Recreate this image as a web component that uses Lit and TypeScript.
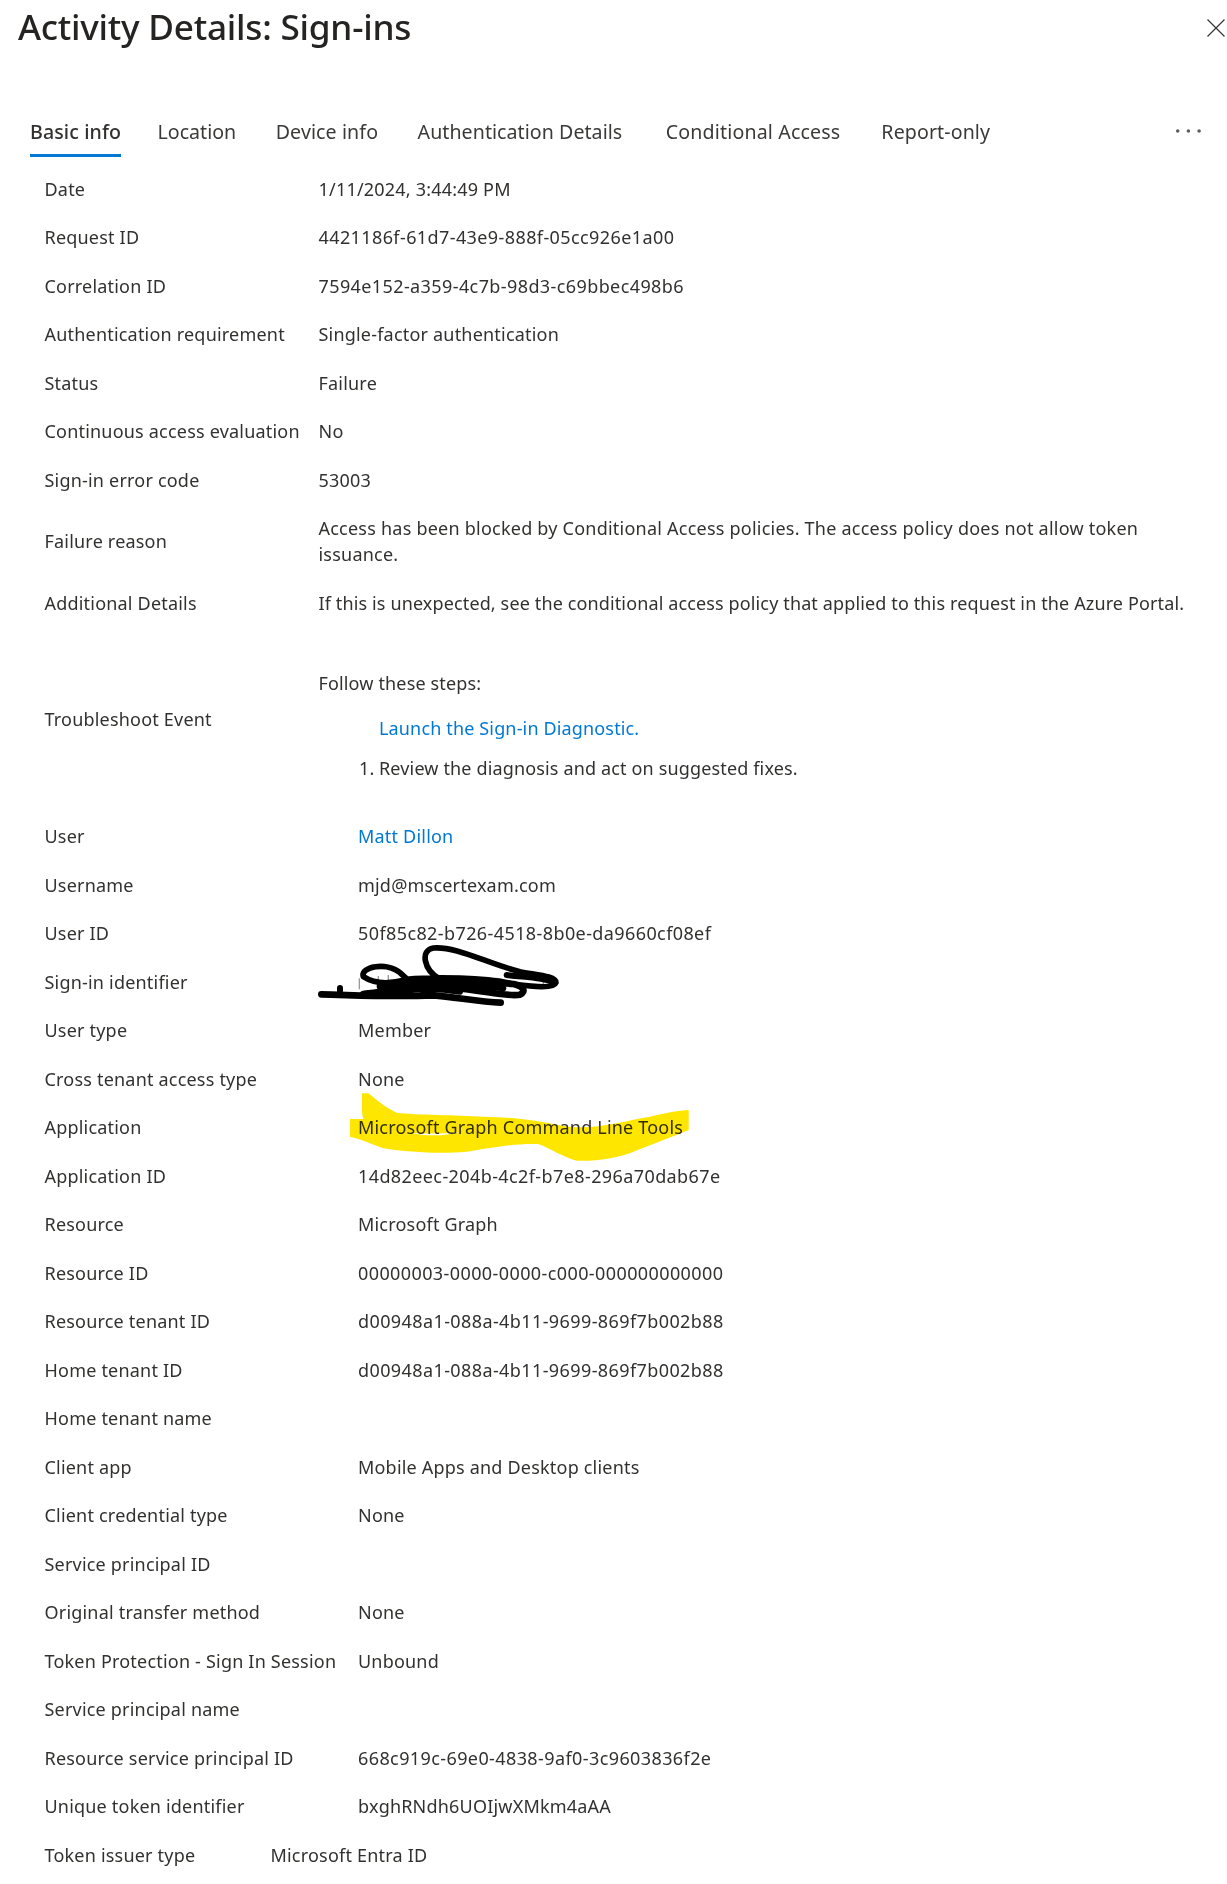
import { html, css, LitElement, svg } from 'lit';
import { customElement } from 'lit/decorators.js';

type Row = [string, string, string?];

const TABS = ['Basic info', 'Location', 'Device info', 'Authentication Details', 'Conditional Access', 'Report-only'];

const TOP_ROWS: Row[] = [
  ['Date', '1/11/2024, 3:44:49 PM'],
  ['Request ID', '4421186f-61d7-43e9-888f-05cc926e1a00', 'id'],
  ['Correlation ID', '7594e152-a359-4c7b-98d3-c69bbec498b6', 'id'],
  ['Authentication requirement', 'Single-factor authentication'],
  ['Status', 'Failure'],
  ['Continuous access evaluation', 'No'],
  ['Sign-in error code', '53003'],
  ['Failure reason', 'Access has been blocked by Conditional Access policies. The access policy does not allow token issuance.', 'wrap'],
  ['Additional Details', 'If this is unexpected, see the conditional access policy that applied to this request in the Azure Portal.', 'tight'],
];

const USER_ROWS: Row[] = [
  ['User', 'Matt Dillon', 'link'],
  ['Username', 'mjd@mscertexam.com'],
  ['User ID', '50f85c82-b726-4518-8b0e-da9660cf08ef', 'id'],
  ['Sign-in identifier', ''],
  ['User type', 'Member'],
  ['Cross tenant access type', 'None'],
  ['Application', 'Microsoft Graph Command Line Tools'],
  ['Application ID', '14d82eec-204b-4c2f-b7e8-296a70dab67e', 'id'],
  ['Resource', 'Microsoft Graph'],
  ['Resource ID', '00000003-0000-0000-c000-000000000000', 'id'],
  ['Resource tenant ID', 'd00948a1-088a-4b11-9699-869f7b002b88', 'id'],
  ['Home tenant ID', 'd00948a1-088a-4b11-9699-869f7b002b88', 'id'],
  ['Home tenant name', ''],
  ['Client app', 'Mobile Apps and Desktop clients'],
  ['Client credential type', 'None'],
  ['Service principal ID', ''],
  ['Original transfer method', 'None'],
  ['Token Protection - Sign In Session', 'Unbound'],
  ['Service principal name', ''],
  ['Resource service principal ID', '668c919c-69e0-4838-9af0-3c9603836f2e', 'id'],
  ['Unique token identifier', 'bxghRNdh6UOIjwXMkm4aAA'],
];

@customElement('app-root')
export class AppRoot extends LitElement {
  static styles = css`
    :host {
      display: block;
      position: relative;
      height: 1884px;
      overflow: hidden;
      background: #fff;
      color: #323130;
      font-family: "Noto Sans", "Open Sans", sans-serif;
      font-size: 18px;
      line-height: 26px;
      letter-spacing: 0.2px;
    }

    .head {
      display: flex;
      justify-content: space-between;
      align-items: flex-start;
      height: 112px;
      padding: 0 2px 0 18px;
    }

    h1 {
      margin: 4px 0 0;
      font-size: 35.2px;
      line-height: 44px;
      font-weight: 500;
      letter-spacing: -0.25px;
      color: #252423;
    }

    .close {
      display: block;
      margin: 19px 0 0;
      width: 18px;
      height: 18px;
    }

    .tabs {
      display: flex;
      align-items: flex-start;
      height: 52.5px;
      padding-left: 30px;
    }

    .tab {
      height: 42px;
      line-height: 40px;
      margin-right: 39.5px;
      font-size: 19.6px;
      letter-spacing: 0.1px;
      color: #3b3a39;
    }

    .tab:nth-child(1) { margin-right: 36.5px; }
    .tab:nth-child(2) { letter-spacing: 0; }
    .tab:nth-child(4) { margin-right: 43.5px; letter-spacing: 0.05px; }
    .tab:nth-child(5) { margin-right: 41px; letter-spacing: 0.15px; }

    .tab.on {
      font-weight: 500;
      color: #323130;
      border-bottom: 3px solid #0078d4;
    }

    .more {
      display: block;
      margin: 16px 25.4px 0 auto;
      width: 27px;
      height: 6px;
    }

    .grid {
      display: grid;
      padding-left: 44.5px;
      align-items: center;
    }

    .grid.top { grid-template-columns: 274px 880px; }
    .grid.user { grid-template-columns: 313.5px 800px; }
    .grid.last { grid-template-columns: 226px 800px; }

    .cell {
      padding: 11.25px 0;
      white-space: nowrap;
    }

    .cell.wrap { white-space: normal; letter-spacing: 0.23px; }
    .cell.tight { letter-spacing: 0.13px; }
    .cell.id { letter-spacing: 0.4px; }

    .link { color: #0078d4; }

    .steps { padding: 42.75px 0 30.75px; letter-spacing: 0.15px; }

    .steps p { margin: 0 0 19px; }

    .steps ol {
      margin: 0;
      padding: 0 0 0 60.5px;
      list-style: none;
    }

    .steps li { position: relative; }

    .steps li + li { margin-top: 14.3px; }

    .num {
      position: absolute;
      left: -20px;
    }

    .ink {
      position: absolute;
      left: 300px;
      top: 920px;
      width: 420px;
      height: 260px;
      pointer-events: none;
      mix-blend-mode: multiply;
    }
  `;

  renderRow([label, value, kind]: Row) {
    return html`
      <div class="cell">${label}</div>
      <div class="cell ${kind ?? ''}">${value}</div>
    `;
  }

  renderInk() {
    return svg`
      <path fill="#ffe600" d="M186 520 L205 520 C225 535 250 560 290 578 C350 585 470 585 550 590 C640 592 700 600 790 618 C880 632 960 605 1050 590 C1100 578 1135 572 1166 570 L1166 630 C1130 645 1060 672 1000 695 C950 715 890 724 830 722 C790 712 750 685 715 672 C650 670 590 680 500 695 C430 702 330 698 250 685 C215 672 190 660 150 650 L150 597 L190 597 C186 585 186 575 186 570 Z"/>
      <path fill="#fff" d="M330 638 C380 642 430 642 480 636 C430 650 370 648 330 638 Z"/>
      <g fill="none" stroke="#9a9a9a" stroke-width="4">
        <path d="M178 175 V208 M235 168 V186 M265 165 V186 M560 180 C585 172 610 175 625 190 M730 182 V198"/>
      </g>
      <g fill="none" stroke="#000" stroke-linecap="round" stroke-linejoin="round">
        <path stroke-width="20" d="M64 223 C160 225 270 232 400 226 C470 232 540 246 602 248"/>
        <path stroke-width="17" d="M420 178 C370 150 360 90 400 84 C470 78 560 130 660 155 C710 165 768 168 768 188 C762 206 700 200 640 192 C560 172 400 170 320 178 C280 190 230 196 190 170 C180 140 260 125 300 158 C340 195 360 215 400 222"/>
        <path stroke-width="20" d="M240 200 C330 188 470 178 640 192 C670 200 680 212 660 224 C620 232 540 208 450 204 C370 200 290 210 190 222"/>
        <path stroke-width="18" d="M120 204 V212 M320 190 C400 200 500 190 610 205 M300 215 C350 205 420 205 480 215 M620 165 C680 172 730 172 755 186"/>
      </g>
    `;
  }

  render() {
    return html`
      <div class="head">
        <h1>Activity Details: Sign-ins</h1>
        <svg class="close" viewBox="0 0 18 18">
          <path d="M0.5 0.5 L17.5 17.5 M17.5 0.5 L0.5 17.5" stroke="#323130" stroke-width="1.1" fill="none"/>
        </svg>
      </div>
      <div class="tabs">
        ${TABS.map((t, i) => html`<div class="tab ${i === 0 ? 'on' : ''}">${t}</div>`)}
        <svg class="more" viewBox="0 0 27 6">
          <circle cx="2.7" cy="3" r="1.8" fill="#605e5c"/>
          <circle cx="13.4" cy="3" r="1.8" fill="#605e5c"/>
          <circle cx="24.1" cy="3" r="1.8" fill="#605e5c"/>
        </svg>
      </div>
      <div class="grid top">
        ${TOP_ROWS.map((r) => this.renderRow(r))}
        <div class="cell">Troubleshoot Event</div>
        <div class="cell steps">
          <p>Follow these steps:</p>
          <ol>
            <li class="link">Launch the Sign-in Diagnostic.</li>
            <li><span class="num">1.</span>Review the diagnosis and act on suggested fixes.</li>
          </ol>
        </div>
      </div>
      <div class="grid user">
        ${USER_ROWS.map((r) => this.renderRow(r))}
      </div>
      <div class="grid last">
        ${this.renderRow(['Token issuer type', 'Microsoft Entra ID'])}
      </div>
      <svg class="ink" viewBox="0 0 1260 780">${this.renderInk()}</svg>
    `;
  }
}
